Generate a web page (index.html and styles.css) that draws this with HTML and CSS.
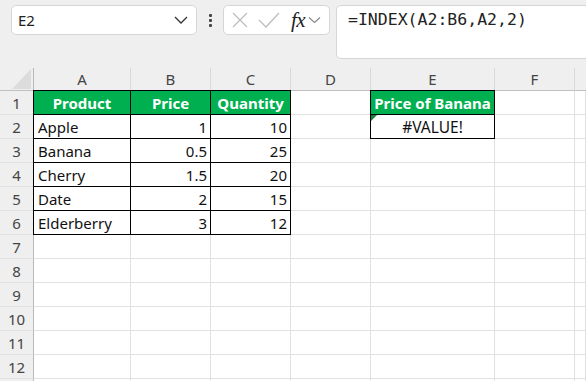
FILE: index.html
```html
<!DOCTYPE html>
<html>
<head>
<meta charset="utf-8">
<link rel="stylesheet" href="styles.css">
</head>
<body>
<div class="app">
  <div class="toolbar">
    <div class="namebox">
      <span class="name">E2</span>
      <svg class="chev" width="14" height="8" viewBox="0 0 14 8"><path d="M1 1 L7 7 L13 1" fill="none" stroke="#333" stroke-width="1.3"/></svg>
    </div>
    <div class="dots"><i></i><i></i><i></i></div>
    <div class="fxbox">
      <svg width="18" height="18" viewBox="0 0 18 18"><path d="M2 2 L16 16 M16 2 L2 16" stroke="#bdbdbd" stroke-width="1.3" fill="none"/></svg>
      <svg width="22" height="18" viewBox="0 0 22 18"><path d="M1 9 L8 16 L21 2" stroke="#bdbdbd" stroke-width="1.3" fill="none"/></svg>
      <span class="fx">fx</span>
      <svg width="13" height="8" viewBox="0 0 13 8"><path d="M1 1.5 L6.5 6.5 L12 1.5" fill="none" stroke="#888" stroke-width="1.1"/></svg>
    </div>
    <div class="formula">=INDEX(A2:B6,A2,2)</div>
  </div>
  <div class="sheet">
    <div class="hc corner"><span class="tri"></span></div>
    <div class="hc">A</div><div class="hc">B</div><div class="hc">C</div><div class="hc">D</div><div class="hc">E</div><div class="hc">F</div><div class="hc last"></div>

    <div class="rh">1</div>
    <div class="c g bt bl">Product</div><div class="c g bt">Price</div><div class="c g bt">Quantity</div><div class="c"></div><div class="c g bt bl">Price of Banana</div><div class="c"></div><div class="c"></div>

    <div class="rh">2</div>
    <div class="c b bl">Apple</div><div class="c b r">1</div><div class="c b r">10</div><div class="c"></div><div class="c b bl ctr err">#VALUE!</div><div class="c"></div><div class="c"></div>

    <div class="rh">3</div>
    <div class="c b bl">Banana</div><div class="c b r">0.5</div><div class="c b r">25</div><div class="c"></div><div class="c"></div><div class="c"></div><div class="c"></div>

    <div class="rh">4</div>
    <div class="c b bl">Cherry</div><div class="c b r">1.5</div><div class="c b r">20</div><div class="c"></div><div class="c"></div><div class="c"></div><div class="c"></div>

    <div class="rh">5</div>
    <div class="c b bl">Date</div><div class="c b r">2</div><div class="c b r">15</div><div class="c"></div><div class="c"></div><div class="c"></div><div class="c"></div>

    <div class="rh">6</div>
    <div class="c b bl">Elderberry</div><div class="c b r">3</div><div class="c b r">12</div><div class="c"></div><div class="c"></div><div class="c"></div><div class="c"></div>

    <div class="rh">7</div><div class="c"></div><div class="c"></div><div class="c"></div><div class="c"></div><div class="c"></div><div class="c"></div><div class="c"></div>
    <div class="rh">8</div><div class="c"></div><div class="c"></div><div class="c"></div><div class="c"></div><div class="c"></div><div class="c"></div><div class="c"></div>
    <div class="rh">9</div><div class="c"></div><div class="c"></div><div class="c"></div><div class="c"></div><div class="c"></div><div class="c"></div><div class="c"></div>
    <div class="rh">10</div><div class="c"></div><div class="c"></div><div class="c"></div><div class="c"></div><div class="c"></div><div class="c"></div><div class="c"></div>
    <div class="rh">11</div><div class="c"></div><div class="c"></div><div class="c"></div><div class="c"></div><div class="c"></div><div class="c"></div><div class="c"></div>
    <div class="rh">12</div><div class="c"></div><div class="c"></div><div class="c"></div><div class="c"></div><div class="c"></div><div class="c"></div><div class="c"></div>
    <div class="rh"></div><div class="c"></div><div class="c"></div><div class="c"></div><div class="c"></div><div class="c"></div><div class="c"></div><div class="c"></div>
  </div>
</div>
</body>
</html>
```
FILE: styles.css
```css
* { box-sizing: border-box; }
html, body { margin: 0; padding: 0; overflow: hidden; background: #efefef; }
body { font-family: "Noto Sans", sans-serif; width: 586px; height: 381px; }

.app { display: flex; flex-direction: column; height: 381px; overflow: hidden; }

.toolbar {
  display: flex;
  align-items: flex-start;
  height: 68px;
  flex: none;
  padding: 5px 0 0 11px;
  background: #efefef;
}
.namebox {
  width: 186px;
  height: 30px;
  background: #fff;
  border: 1px solid #d6d6d6;
  border-radius: 5px;
  display: flex;
  align-items: center;
  justify-content: space-between;
  padding: 0 8px 0 6px;
}
.name { font-size: 15px; color: #222; }
.dots {
  width: 26px;
  height: 30px;
  display: flex;
  flex-direction: column;
  align-items: center;
  justify-content: center;
  gap: 2px;
}
.dots i { display: block; width: 3px; height: 3px; background: #444; border-radius: 1px; }
.fxbox {
  width: 107px;
  height: 30px;
  background: #fff;
  border: 1px solid #d6d6d6;
  border-radius: 5px;
  display: flex;
  align-items: center;
  padding: 0 2px 0 7px;
}
.fxbox svg:first-child { margin-right: 9px; }
.fxbox svg:nth-child(2) { margin-right: 11px; }
.fx {
  font-family: "Liberation Serif", serif;
  font-style: italic;
  font-size: 21px;
  color: #222;
  line-height: 20px;
  margin-right: 3px;
  letter-spacing: -0.5px;
}
.formula {
  flex: 1;
  margin-left: 6px;
  margin-right: -10px;
  height: 54px;
  background: #fff;
  border: 1px solid #d6d6d6;
  border-radius: 5px;
  padding: 4px 0 0 11px;
  font-family: "DejaVu Sans Mono", monospace;
  font-size: 16.5px;
  line-height: 20px;
  color: #222;
}

.sheet {
  display: grid;
  grid-template-columns: 34px 97px 80px 80px 80px 124px 80px 1fr;
  grid-template-rows: 23px repeat(13, 24px);
  background: #fff;
}
.hc {
  background: #efefef;
  border-right: 1px solid #d9d9d9;
  border-bottom: 1px solid #c0c0c0;
  color: #444;
  font-size: 15px;
  display: flex;
  align-items: center;
  justify-content: center;
  line-height: 22px;
}
.hc.last { border-right: none; }
.corner { position: relative; border-right: 1px solid #b8b8b8; }
.tri {
  position: absolute;
  right: 2px;
  bottom: 1px;
  width: 19px;
  height: 20px;
  background: #dcdcdc;
  clip-path: polygon(100% 0, 100% 100%, 0 100%);
}
.rh {
  background: #efefef;
  border-right: 1px solid #b8b8b8;
  border-bottom: 1px solid #e1e1e1;
  color: #444;
  font-size: 15px;
  display: flex;
  align-items: center;
  justify-content: center;
}
.c {
  border-right: 1px solid #e1e1e1;
  border-bottom: 1px solid #e1e1e1;
  font-size: 15px;
  color: #111;
  padding: 0 4px;
  display: flex;
  align-items: center;
  white-space: nowrap;
  position: relative;
}
.c.g {
  background: #00b050;
  color: #fff;
  font-weight: bold;
  justify-content: center;
  border-right-color: #000;
  border-bottom-color: #000;
}
.c.b { border-right-color: #000; border-bottom-color: #000; }
.c.r { justify-content: flex-end; padding-right: 3px; }
.c.ctr { justify-content: center; font-size: 15.5px; }
.c.bt { box-shadow: 0 -1px 0 #000; }
.c.bl { box-shadow: -1px 0 0 #000; }
.c.bt.bl { box-shadow: 0 -1px 0 #000, -1px 0 0 #000, -1px -1px 0 #000; }
.err::before {
  content: "";
  position: absolute;
  left: 0;
  top: 0;
  width: 6px;
  height: 6px;
  background: #1e7a36;
  clip-path: polygon(0 0, 100% 0, 0 100%);
}
```
